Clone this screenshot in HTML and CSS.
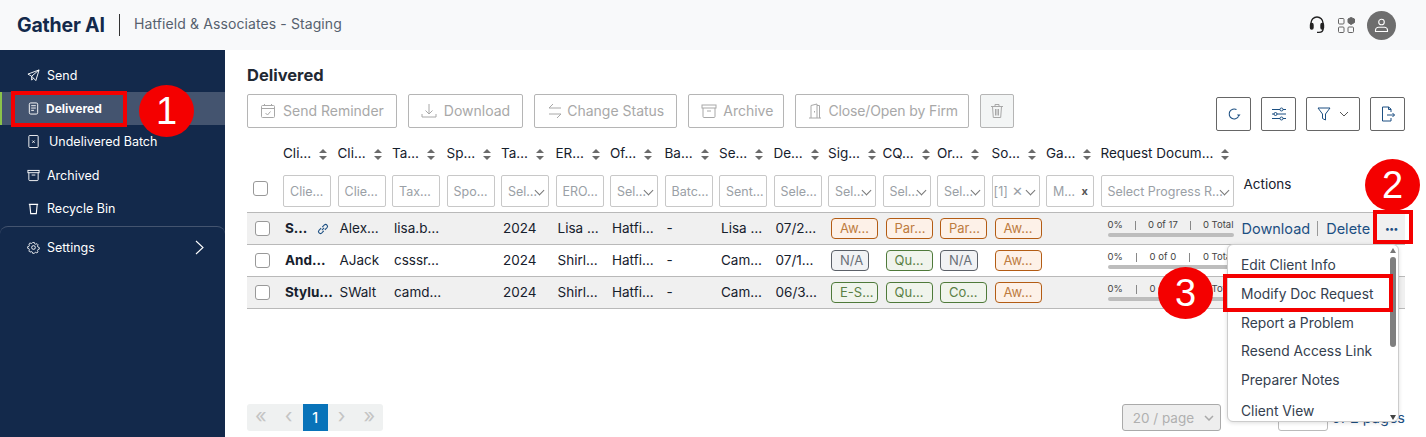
FILE: index.html
```html
<!DOCTYPE html>
<html lang="en">
<head>
  <meta charset="UTF-8">
  <title>Gather AI - Delivered</title>
  <link rel="stylesheet" href="styles.css">
</head>
<body>
  <header class="topbar">
    <div class="logo">Gather AI</div>
    <div class="firm">Hatfield &amp; Associates - Staging</div>
    <div class="top-icons">
      <svg width="18" height="20" viewBox="0 0 18 20" fill="none" stroke="#222" stroke-width="1.4"><path d="M3 11V8a6 6 0 0 1 12 0v3"/><rect x="2.500" y="8.500" width="2.500" height="5.500" rx="1.200" fill="#222"/><rect x="13" y="8.500" width="2.500" height="5.500" rx="1.200" fill="#222"/><path d="M15 14c0 2-1.500 3.400-4 3.400H9"/></svg>
      <svg width="19" height="18" viewBox="0 0 19 18" fill="none" stroke="#666" stroke-width="1"><rect x="1.500" y="2.500" width="5.500" height="5.500" rx="1"/><rect x="1.500" y="11" width="5.500" height="5.500" rx="1"/><rect x="11" y="11" width="5.500" height="5.500" rx="1"/><path d="M14 1.500l3.500 1.500v3.500L14 8.500 11 6.500V3z" fill="#666"/></svg>
      <div class="avatar">
        <svg width="15" height="15" viewBox="0 0 15 15" fill="none" stroke="#fff" stroke-width="1.100"><circle cx="7.500" cy="4" r="2.800"/><path d="M1.500 13.500v-1.500c0-1.500 1.500-2.800 3-2.800h6c1.500 0 3 1.300 3 2.800v1.500z"/></svg>
      </div>
    </div>
  </header>

  <div class="layout">
    <nav class="sidebar">
      <a class="nav-item first">
        <svg class="nav-icon" viewBox="0 0 14 14" fill="none" stroke="#fff" stroke-width="1"><path d="M13 1L1 5.500l4 2.300L13 1zM13 1L9.500 12.500 5 7.800M5 7.800V12l2-2.200"/></svg>
        Send
      </a>
      <a class="nav-item active">
        <svg class="nav-icon" viewBox="0 0 14 14" fill="none" stroke="#fff" stroke-width="1"><rect x="2.500" y="1" width="9" height="12" rx="1.500"/><path d="M4.500 4h5M4.500 6.500h5M4.500 9h3"/></svg>
        Delivered
      </a>
      <a class="nav-item batch">
        <svg class="nav-icon" viewBox="0 0 14 14" fill="none" stroke="#fff" stroke-width="1"><rect x="2" y="0.500" width="10" height="13" rx="1"/><path d="M5.800 6l2.400 2.400M8.200 6L5.800 8.400"/></svg>
        Undelivered Batch
      </a>
      <a class="nav-item">
        <svg class="nav-icon" viewBox="0 0 14 14" fill="none" stroke="#fff" stroke-width="1"><rect x="1" y="1.500" width="12" height="2.500"/><path d="M2 4v7.500a1 1 0 0 0 1 1h8a1 1 0 0 0 1-1V4M5 6.500h4"/></svg>
        Archived
      </a>
      <a class="nav-item">
        <svg class="nav-icon" viewBox="0 0 14 14" fill="none" stroke="#fff" stroke-width="1.200"><path d="M2 2.500h10M3 2.500l1 10h6l1-10"/></svg>
        Recycle Bin
      </a>
      <a class="nav-item settings">
        <svg class="nav-icon" viewBox="0 0 14 14" fill="none" stroke="#fff" stroke-width="1"><circle cx="7" cy="7" r="2"/><path d="M6 1h2l.4 1.600 1.400.6 1.400-.8 1.300 1.400-.8 1.400.6 1.300 1.600.5v2l-1.600.4-.6 1.400.8 1.400-1.400 1.300-1.400-.8-1.300.6L8 14H6l-.5-1.600-1.300-.6-1.400.8-1.400-1.400.8-1.400-.6-1.300L0 8V6l1.600-.4.6-1.400-.8-1.400 1.400-1.300 1.400.8 1.300-.6z" transform="translate(.7 .7) scale(.9)"/></svg>
        Settings
        <svg class="chev" width="9" height="15" viewBox="0 0 9 15" fill="none" stroke="#fff" stroke-width="1.100"><path d="M1 1l7 6.500L1 14"/></svg>
      </a>
    </nav>

    <main class="content">
      <h1>Delivered</h1>
      <div class="toolbar">
        <button class="btn">
          <svg width="16" height="16" viewBox="0 0 16 16" fill="none" stroke="#a8a8a8"><rect x="1.500" y="2.500" width="13" height="12" rx="1"/><path d="M1.500 5.500h13M4.500 1v2M11.500 1v2M5.500 10l2 2 3-3.500"/></svg>
          Send Reminder
        </button>
        <button class="btn">
          <svg width="16" height="16" viewBox="0 0 16 16" fill="none" stroke="#a8a8a8"><path d="M8 1v10M4.500 7.500L8 11l3.500-3.500M1 11v3h14v-3"/></svg>
          Download
        </button>
        <button class="btn btn-status">
          <svg width="16" height="16" viewBox="0 0 16 16" fill="none" stroke="#a8a8a8"><path d="M14 5H2l4-4M2 11h12l-4 4"/></svg>
          Change Status
        </button>
        <button class="btn btn-archive">
          <svg width="16" height="16" viewBox="0 0 16 16" fill="none" stroke="#a8a8a8"><rect x="1" y="2" width="14" height="3"/><path d="M2 5v8.500a1 1 0 0 0 1 1h10a1 1 0 0 0 1-1V5M6 8h4"/></svg>
          Archive
        </button>
        <button class="btn btn-firm">
          <svg width="14" height="16" viewBox="0 0 14 16" fill="none" stroke="#a8a8a8"><path d="M3 15V2.500L9 1v14M9 2.500h2.500V15M1 15h12M6.500 8v1.500"/></svg>
          Close/Open by Firm
        </button>
        <button class="btn trash">
          <svg width="14" height="16" viewBox="0 0 14 16" fill="none" stroke="#a8a8a8"><path d="M1 3.500h12M5 3.500V1.500h4v2M2.500 3.500l.8 11h7.400l.8-11M5.500 6v6.500M7 6v6.500M8.500 6v6.500"/></svg>
        </button>
        <div class="tools-right">
          <button class="tool">
            <svg width="14" height="14" viewBox="0 0 14 14" fill="none" stroke="#1c4f82" stroke-width="1.100"><path d="M11.500 9.500A5 5 0 1 1 9.500 2.500"/><path d="M10 7.500h3.500L11.700 9.800z" fill="#1c4f82" stroke="none"/></svg>
          </button>
          <button class="tool">
            <svg width="16" height="14" viewBox="0 0 16 14" fill="none" stroke="#1c4f82"><path d="M1 2.500h8M12 2.500h3M1 7h2M6 7h9M1 11.500h8M12 11.500h3"/><circle cx="10.500" cy="2.500" r="1.500"/><circle cx="4.500" cy="7" r="1.500"/><circle cx="10.500" cy="11.500" r="1.500"/></svg>
          </button>
          <button class="tool wide">
            <svg width="14" height="14" viewBox="0 0 14 14" fill="none" stroke="#1c4f82"><path d="M1 1h12L8.500 7v6l-3-1.500V7z"/></svg>
            <svg width="10" height="6" viewBox="0 0 10 6" fill="none" stroke="#555"><path d="M1 1l4 4 4-4"/></svg>
          </button>
          <button class="tool">
            <svg width="14" height="16" viewBox="0 0 14 16" fill="none" stroke="#1c4f82"><path d="M10 6V3L7.500 1H1.500v14h8.500v-3M7.500 1v2.500H10M6 9h7.500M11.500 7l2 2-2 2"/></svg>
          </button>
        </div>
      </div>

      <table class="grid">
        <colgroup>
          <col class="c-check">
          <col span="15" class="c-std">
          <col class="c-req">
          <col class="c-act">
        </colgroup>
        <thead>
          <tr class="head">
            <th></th>
            <th>Cli…<i class="sort"></i></th>
            <th>Cli…<i class="sort"></i></th>
            <th>Ta…<i class="sort"></i></th>
            <th>Sp…<i class="sort"></i></th>
            <th>Ta…<i class="sort"></i></th>
            <th>ER…<i class="sort"></i></th>
            <th>Of…<i class="sort"></i></th>
            <th>Ba…<i class="sort"></i></th>
            <th>Se…<i class="sort"></i></th>
            <th>De…<i class="sort"></i></th>
            <th>Sig…<i class="sort"></i></th>
            <th>CQ…<i class="sort"></i></th>
            <th>Or…<i class="sort"></i></th>
            <th>So…<i class="sort"></i></th>
            <th>Ga…<i class="sort"></i></th>
            <th>Request Docum…<i class="sort"></i></th>
            <th></th>
          </tr>
          <tr class="filters">
            <th><span class="check top"></span></th>
            <th><span class="field">Clie…</span></th>
            <th><span class="field">Clie…</span></th>
            <th><span class="field">Tax…</span></th>
            <th><span class="field">Spo…</span></th>
            <th><span class="field sel">Sel…</span></th>
            <th><span class="field">ERO…</span></th>
            <th><span class="field sel">Sel…</span></th>
            <th><span class="field">Batc…</span></th>
            <th><span class="field">Sent…</span></th>
            <th><span class="field">Sele…</span></th>
            <th><span class="field sel">Sel…</span></th>
            <th><span class="field sel">Sel…</span></th>
            <th><span class="field sel">Sel…</span></th>
            <th><span class="field sel tag">[1] ✕</span></th>
            <th><span class="field clear">M…<b>x</b></span></th>
            <th><span class="field sel long">Select Progress R…</span></th>
            <th class="act-head">Actions</th>
          </tr>
        </thead>
        <tbody>
          <tr class="odd">
            <td class="mid"><span class="check"></span></td>
            <td class="name">S…
              <svg class="link" width="12" height="12" viewBox="0 0 11 11" fill="none" stroke="#1c4f82"><path d="M4.500 6.500l2-2M3.800 4.800L1.800 6.800a1.700 1.700 0 0 0 2.400 2.400l2-2M7.200 6.200l2-2a1.700 1.700 0 0 0-2.400-2.400l-2 2"/></svg>
            </td>
            <td>Alex…</td><td>lisa.b…</td><td></td><td>2024</td><td>Lisa …</td><td>Hatfi…</td><td>-</td><td>Lisa …</td><td>07/2…</td>
            <td><span class="badge warn">Aw…</span></td>
            <td><span class="badge warn">Par…</span></td>
            <td><span class="badge warn">Par…</span></td>
            <td><span class="badge warn">Aw…</span></td>
            <td></td>
            <td>
              <div class="prog-text"><span>0%</span><u></u><span>0 of 17</span><u></u><span>0 Total</span></div>
              <div class="prog-bar"></div>
            </td>
            <td class="actions"><a>Download</a><em></em><a>Delete</a><strong class="dots">•••</strong></td>
          </tr>
          <tr>
            <td class="mid"><span class="check"></span></td>
            <td class="name">And…</td>
            <td>AJack</td><td>csssr…</td><td></td><td>2024</td><td>Shirl…</td><td>Hatfi…</td><td>-</td><td>Cam…</td><td>07/1…</td>
            <td><span class="badge na">N/A</span></td>
            <td><span class="badge ok">Qu…</span></td>
            <td><span class="badge na">N/A</span></td>
            <td><span class="badge warn">Aw…</span></td>
            <td></td>
            <td>
              <div class="prog-text"><span>0%</span><u></u><span>0 of 0</span><u></u><span>0 Total</span></div>
              <div class="prog-bar"></div>
            </td>
            <td></td>
          </tr>
          <tr class="odd">
            <td class="mid"><span class="check"></span></td>
            <td class="name">Stylu…</td>
            <td>SWalt</td><td>camd…</td><td></td><td>2024</td><td>Shirl…</td><td>Hatfi…</td><td>-</td><td>Cam…</td><td>06/3…</td>
            <td><span class="badge ok">E-S…</span></td>
            <td><span class="badge ok">Qu…</span></td>
            <td><span class="badge ok">Co…</span></td>
            <td><span class="badge warn">Aw…</span></td>
            <td></td>
            <td>
              <div class="prog-text"><span>0%</span><u></u><span>0 of 0</span><u></u><span>0 Total</span></div>
              <div class="prog-bar"></div>
            </td>
            <td></td>
          </tr>
        </tbody>
      </table>

      <div class="pager-row">
        <div class="pager">
          <span class="pg">«</span><span class="pg">‹</span><span class="pg on">1</span><span class="pg">›</span><span class="pg">»</span>
        </div>
        <div class="pager-right">
          <span class="per-page">20 / page
            <svg width="10" height="6" viewBox="0 0 10 6" fill="none" stroke="#aaa" stroke-width="1.500"><path d="M1 1l4 4 4-4"/></svg>
          </span>
          <span class="jump"></span>
          <span class="of-pages">of 2 pages</span>
        </div>
      </div>
    </main>
  </div>

  <!-- dropdown open on first row -->
  <div class="menu">
    <div class="menu-item">Edit Client Info</div>
    <div class="menu-item">Modify Doc Request</div>
    <div class="menu-item">Report a Problem</div>
    <div class="menu-item">Resend Access Link</div>
    <div class="menu-item">Preparer Notes</div>
    <div class="menu-item last">Client View</div>
    <div class="scroll-thumb"></div>
    <i class="arrow up"></i>
    <i class="arrow down"></i>
  </div>

  <!-- tutorial markers -->
  <div class="mark box-1"></div>
  <div class="mark box-2"></div>
  <div class="mark box-3"></div>
  <div class="step step-1">1</div>
  <div class="step step-2">2</div>
  <div class="step step-3">3</div>
</body>
</html>
```

FILE: styles.css
```css
* { box-sizing: border-box; }
html, body { margin: 0; height: 437px; overflow: hidden; }
body { font-family: Inter, "Noto Sans", sans-serif; font-size: 13.5px; color: #16202c; background: #fff; position: relative; }

.topbar { height: 50px; background: #f8f9fa; display: flex; align-items: center; padding: 0 30px 0 17px; }
.logo { font-size: 19.5px; font-weight: 700; color: #13294b; padding-right: 14px; margin-right: 14px; line-height: 22px; border-right: 1px solid #333; letter-spacing: -.2px; width: 103px; white-space: nowrap; }
.firm { font-size: 14px; color: #56616e; letter-spacing: .1px; margin-bottom: 3px; }
.top-icons { margin-left: auto; display: flex; align-items: center; gap: 11px; }
.avatar { width: 29px; height: 29px; border-radius: 50%; background: #6e6e6e; display: flex; align-items: center; justify-content: center; }

.layout { display: flex; height: 387px; }
.sidebar { width: 225px; background: #13294b; padding-top: 9px; flex: none; }
.nav-item { height: 33.5px; display: flex; align-items: center; padding-left: 27px; color: #fff; font-size: 12.5px; gap: 7px; }
.nav-item.first { height: 33px; }
.nav-icon { width: 13px; height: 13px; flex: none; }
.nav-item.active { background: #44546f; border-left: 2px solid #8bc34a; padding-left: 25px; font-weight: 700; height: 33px; font-size: 12px; gap: 6px; }
.nav-item.batch { gap: 9px; }
.settings { border-top: 1px solid #44546f; border-radius: 8px 8px 0 0; height: 42px; position: relative; }
.chev { margin-left: auto; margin-right: 21px; }

.content { flex: 1; padding: 16px 21px 6px 22px; display: flex; flex-direction: column; min-width: 0; }
h1 { margin: 0 0 9px; font-size: 16.5px; font-weight: 700; line-height: 19px; color: #1f2933; }

.toolbar { display: flex; gap: 11px; height: 36px; }
.btn { height: 34px; background: #fff; border: 1px solid #b5b5b5; border-radius: 2px; color: #a8a8a8; font: inherit; font-size: 14px; padding: 0 12px 1px; display: flex; align-items: center; gap: 7px; white-space: nowrap; }
.btn-status { gap: 4px; }
.btn-archive { gap: 6px; padding-right: 10px; }
.btn-firm { letter-spacing: -.12px; gap: 6px; padding-right: 10px; }
.trash { background: #f3f5f5; padding: 0 9px; }
.tools-right { margin-left: auto; display: flex; gap: 10px; padding-top: 3px; }
.tool { height: 34px; width: 35px; background: #fff; border: 1px solid #666; border-radius: 2px; display: flex; align-items: center; justify-content: center; gap: 8px; padding: 0; }
.tool.wide { width: 54px; }

.grid { table-layout: fixed; width: 1158px; border-collapse: collapse; margin-top: 6px; }
.c-check { width: 36px; }
.c-std { width: 54.5px; }
.c-req { width: 141px; }
.grid th { font-weight: 400; text-align: left; padding: 0; white-space: nowrap; }
.grid .head th { height: 39px; font-size: 13.5px; vertical-align: top; padding-top: 8px; line-height: 18px; }
.filters th { height: 37px; vertical-align: top; }
.sort { display: inline-block; position: relative; width: 8px; height: 11px; margin-left: 8px; vertical-align: -2px; }
.sort::before, .sort::after { content: ""; position: absolute; left: 0; border: 4px solid transparent; border-top-width: 0; border-bottom: 4px solid #6b6b6b; }
.sort::before { top: 0; }
.sort::after { bottom: 0; transform: rotate(180deg); }
.field { display: flex; align-items: center; width: 48px; height: 32px; border: 1px solid #c8c8c8; border-radius: 2px; padding-left: 6px; font-size: 12.5px; color: #9aa0a6; position: relative; overflow: hidden; }
.field.sel::after { content: ""; position: absolute; right: 5px; top: 11px; width: 6px; height: 6px; border: solid #777; border-width: 0 1.3px 1.3px 0; transform: rotate(45deg); }
.field.tag { padding-left: 1px; letter-spacing: .1px; }
.field.clear b { position: absolute; right: 5px; color: #555; font-size: 11px; }
.field.long { width: 133px; }
.grid .act-head { vertical-align: top; font-size: 13.5px; padding-left: 2px; line-height: 19px; }
.check { display: block; width: 15px; height: 15px; border: 1px solid #999; border-radius: 3px; background: #fff; }
.check.top { margin: 6px 0 0 6px; }

.grid td { height: 32px; border-top: 1px solid #b9b9b9; border-bottom: 1px solid #b9b9b9; padding: 0 0 0 2px; white-space: nowrap; font-size: 13.5px; }
.grid tr.odd td { background: #f0f0f0; }
.grid td.mid { padding-left: 8px; }
.name { font-weight: 700; }
.link { margin-left: 7px; vertical-align: -2px; }
.badge { display: inline-block; width: 47px; height: 21px; line-height: 19px; margin-left: 1px; border: 1px solid; border-radius: 4px; padding-left: 8px; font-size: 13px; vertical-align: middle; }
.warn { border-color: #b35c14; background: #fdf1e8; color: #bd7c3f; }
.ok { border-color: #4f7a3a; background: #f0f4ec; color: #5a7f45; }
.na { border-color: #5b6068; background: #f1f2f4; color: #6b7078; width: 38px; }
.prog-text { display: flex; justify-content: space-between; align-items: center; width: 126px; margin-left: 5px; font-size: 9.5px; line-height: 12px; color: #444; margin-bottom: 2px; }
.prog-text u { display: block; width: 1px; height: 9px; background: #888; text-decoration: none; }
.prog-bar { width: 126px; height: 4px; margin-left: 5px; border-radius: 2px; background: #bdbdbd; }
.grid td.actions { color: #1c4f82; font-size: 14.5px; padding-left: 0; }
.actions em { display: inline-block; width: 1px; height: 15px; background: #999; margin: 0 8px 0 7px; vertical-align: -2px; }
.dots { font-size: 9px; margin-left: 15px; vertical-align: 2px; color: #1c4f82; }

.pager-row { margin-top: auto; display: flex; justify-content: space-between; align-items: flex-end; height: 27px; }
.pager { display: flex; background: #eff1f1; border-radius: 3px; height: 27px; }
.pg { width: 27.8px; display: flex; align-items: center; justify-content: center; color: #c4c4c4; font-size: 20px; line-height: 1; padding-bottom: 3px; }
.pg.on { background: #0873b9; color: #fff; font-size: 14px; font-weight: 500; width: 25px; padding-bottom: 0; }
.pager-right { display: flex; align-items: center; }
.per-page { width: 99px; height: 27px; background: #eee; border: 1px solid #aaa; border-radius: 3px; color: #b0b0b0; display: flex; align-items: center; justify-content: space-between; padding: 0 6px 0 10px; font-size: 13.5px; }
.jump { width: 50px; height: 27px; border: 1px solid #bbb; border-radius: 3px; margin-left: 57px; }
.of-pages { margin-left: 4px; color: #1c4f82; font-size: 14.5px; white-space: nowrap; }

/* overlays */
.menu { position: absolute; left: 1227px; top: 244px; width: 172px; height: 178px; background: #fff; border: 1px solid #ccc; border-radius: 6px; padding-top: 6px; overflow: hidden; box-shadow: 0 1px 4px #0002; }
.menu-item { height: 28.8px; line-height: 28.8px; padding-left: 13px; font-size: 13.8px; color: #34404e; white-space: nowrap; }
.menu-item.last { margin-top: 2px; }
.scroll-thumb { position: absolute; right: 2px; top: 12px; width: 6px; height: 90px; border-radius: 3px; background: #7f7f7f; }
.arrow { position: absolute; right: 2px; border: 3px solid transparent; }
.arrow.up { top: 0; border-bottom: 5px solid #777; }
.arrow.down { bottom: -2px; border-top: 5px solid #444; }

.mark { position: absolute; border: 4px solid #f40000; }
.box-1 { left: 11px; top: 91px; width: 116px; height: 36px; }
.box-2 { left: 1373px; top: 210px; width: 40px; height: 34px; }
.box-3 { left: 1223px; top: 274px; width: 170px; height: 38px; }
.step { position: absolute; width: 55px; height: 52px; border-radius: 50%; background: #f40000; color: #fff; font-family: "Liberation Sans", Arial, sans-serif; font-size: 38px; line-height: 52px; text-align: center; }
.step-1 { left: 139px; top: 85px; }
.step-2 { left: 1365px; top: 159px; }
.step-3 { left: 1158px; top: 267px; }
```
